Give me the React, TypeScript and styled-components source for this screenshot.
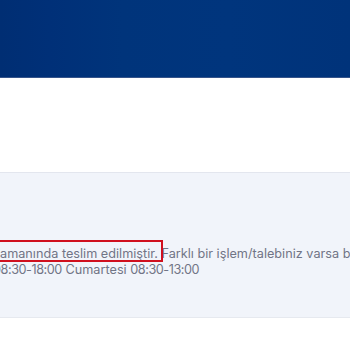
import styled, { createGlobalStyle } from "styled-components";

const GlobalStyle = createGlobalStyle`
  html, body {
    margin: 0;
    padding: 0;
    background: #ffffff;
    overflow: hidden;
  }
  body {
    font-family: Inter, "Open Sans", sans-serif;
  }
`;

const Page = styled.div`
  width: 350px;
  height: 350px;
  overflow: hidden;
  display: flex;
  flex-direction: column;
`;

const Header = styled.header`
  height: 77px;
  flex-shrink: 0;
  background: linear-gradient(
    90deg,
    #002e73 0%,
    #003078 14%,
    #00347b 35%,
    #00357d 65%,
    #00337a 100%
  );
  border-bottom: 1px solid #36548a;
`;

const Spacer = styled.div`
  height: 94px;
  flex-shrink: 0;
`;

const InfoPanel = styled.section`
  flex-shrink: 0;
  background: #f1f4fa;
  border-top: 1px solid #e3e6ee;
  border-bottom: 1px solid #e6e9ef;
  padding: 73px 0 39px;
`;

const InfoText = styled.p`
  margin: 0 0 0 -7px;
  width: 760px;
  font-size: 12.7px;
  line-height: 16px;
  color: #717586;
`;

const Time = styled.span`
  white-space: nowrap;
  letter-spacing: -0.45px;
`;

const Highlight = styled.span`
  position: relative;

  &::after {
    content: "";
    position: absolute;
    left: -4px;
    right: -5px;
    top: -6px;
    bottom: -1px;
    border: 2px solid #d0101e;
    pointer-events: none;
  }
`;

export default function App() {
  return (
    <>
      <GlobalStyle />
      <Page>
        <Header />
        <Spacer />
        <InfoPanel>
          <InfoText>
            <Highlight>zamanında teslim edilmiştir.</Highlight> Farklı bir
            işlem/talebiniz varsa bizimle iletişime geçebilirsiniz. Çalışma
            saatlerimiz Hafta içi <Time>08:30-18:00</Time> Cumartesi{" "}
            <Time>08:30-13:00</Time>
          </InfoText>
        </InfoPanel>
      </Page>
    </>
  );
}
